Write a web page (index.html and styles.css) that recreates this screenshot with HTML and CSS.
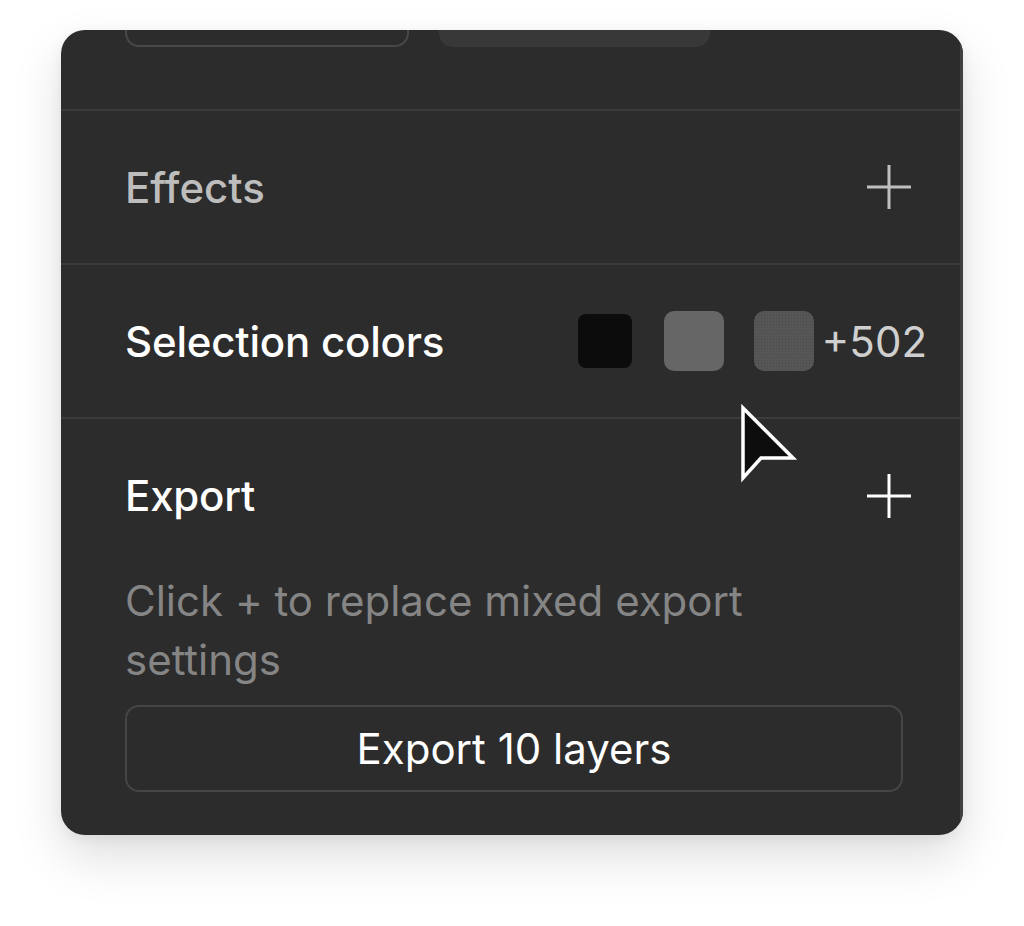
FILE: index.html
```html
<!DOCTYPE html>
<html lang="en">
<head>
<meta charset="utf-8">
<title>Design panel</title>
<link rel="stylesheet" href="styles.css">
</head>
<body>
<div class="stage">
  <div class="panel">
    <div class="scrolltrack"></div>
    <section class="sec sec-top">
      <div class="top-row">
        <div class="top-box outlined"></div>
        <div class="top-box filled"></div>
      </div>
    </section>
    <section class="sec sec-row">
      <h2 class="title muted">Effects</h2>
      <svg class="plus muted-icon" viewBox="0 0 44 44" width="44" height="44"><path d="M22 0V44M0 22H44" stroke="currentColor" stroke-width="3"/></svg>
    </section>
    <section class="sec sec-row">
      <h2 class="title">Selection colors</h2>
      <div class="swatches">
        <span class="swatch black"></span>
        <span class="swatch gray"></span>
        <span class="swatch mixed"></span>
        <span class="more">+502</span>
      </div>
    </section>
    <section class="sec sec-export">
      <div class="export-head">
        <h2 class="title">Export</h2>
        <svg class="plus" viewBox="0 0 44 44" width="44" height="44"><path d="M22 0V44M0 22H44" stroke="currentColor" stroke-width="3"/></svg>
      </div>
      <p class="hint">Click + to replace mixed export settings</p>
      <button class="export-btn">Export 10 layers</button>
    </section>
    <svg class="cursor" viewBox="0 0 60 80" width="60" height="80"><path d="M5 4 L55 54 L23 54 L5 74 Z" fill="#0d0d0d" stroke="#fff" stroke-width="3.5" stroke-linejoin="miter"/></svg>
  </div>
</div>
</body>
</html>
```
FILE: styles.css
```css
* { box-sizing: border-box; }
html, body { margin: 0; padding: 0; background: #ffffff; }
body { font-family: Inter, "Noto Sans", sans-serif; width: 1024px; height: 926px; overflow: hidden; }
.stage { padding: 30px 61px 0 61px; }
.panel {
  position: relative;
  width: 902px;
  height: 805px;
  background: #2c2c2c;
  border-radius: 24px;
  overflow: hidden;
  box-shadow: 0 22px 50px rgba(0,0,0,0.13), 0 4px 14px rgba(0,0,0,0.06);
}
.scrolltrack {
  position: absolute;
  top: 0; right: 0; bottom: 0;
  width: 3px;
  background: #404040;
}
.sec { border-bottom: 2px solid #3b3b3b; }
.sec-top { height: 81px; display: flow-root; }
.top-row { display: flex; gap: 30px; padding-left: 64px; margin-top: -30px; }
.top-box { height: 47px; border-radius: 0 0 14px 14px; }
.top-box.outlined { width: 284px; border: 2px solid #484848; }
.top-box.filled { width: 271px; background: #383838; }
.sec-row {
  height: 154px;
  display: flex;
  align-items: center;
  justify-content: space-between;
  padding: 0 38px 0 64px;
}
.title {
  margin: 0;
  font-size: 42px;
  font-weight: 500;
  color: #ffffff;
  letter-spacing: -0.2px;
}
.title.muted { color: #bdbdbd; font-weight: 500; letter-spacing: 0; }
.plus { color: #ffffff; display: block; margin-right: 14px; }
.muted-icon { color: #bfbfbf; }
.swatches { display: flex; align-items: center; }
.swatch { display: block; border-radius: 10px; }
.swatch.black { width: 54px; height: 54px; background: #0c0c0c; border-radius: 8px; margin-right: 32px; }
.swatch.gray { width: 60px; height: 60px; background: #666666; margin-right: 30px; }
.swatch.mixed {
  width: 60px; height: 60px;
  background-color: #565656;
  background-image: radial-gradient(#4c4c4c 0.8px, transparent 1px);
  background-size: 3px 3px;
}
.more { font-size: 42px; color: #cfcfcf; margin-left: 8px; margin-right: -2px; }
.sec-export { border-bottom: none; padding: 0 60px 0 64px; }
.export-head {
  height: 153px;
  display: flex;
  align-items: center;
  justify-content: space-between;
}
.export-head .plus { margin-right: -8px; }
.hint {
  margin: -1px 0 0 0;
  font-size: 42px;
  line-height: 59px;
  color: #858585;
  width: 660px;
}
.export-btn {
  display: block;
  margin-top: 16px;
  width: 778px;
  height: 87px;
  background: transparent;
  border: 2px solid #464646;
  border-radius: 14px;
  color: #ffffff;
  font-family: inherit;
  font-size: 42px;
  font-weight: 400;
}
.cursor { position: absolute; left: 677px; top: 374px; }
```
